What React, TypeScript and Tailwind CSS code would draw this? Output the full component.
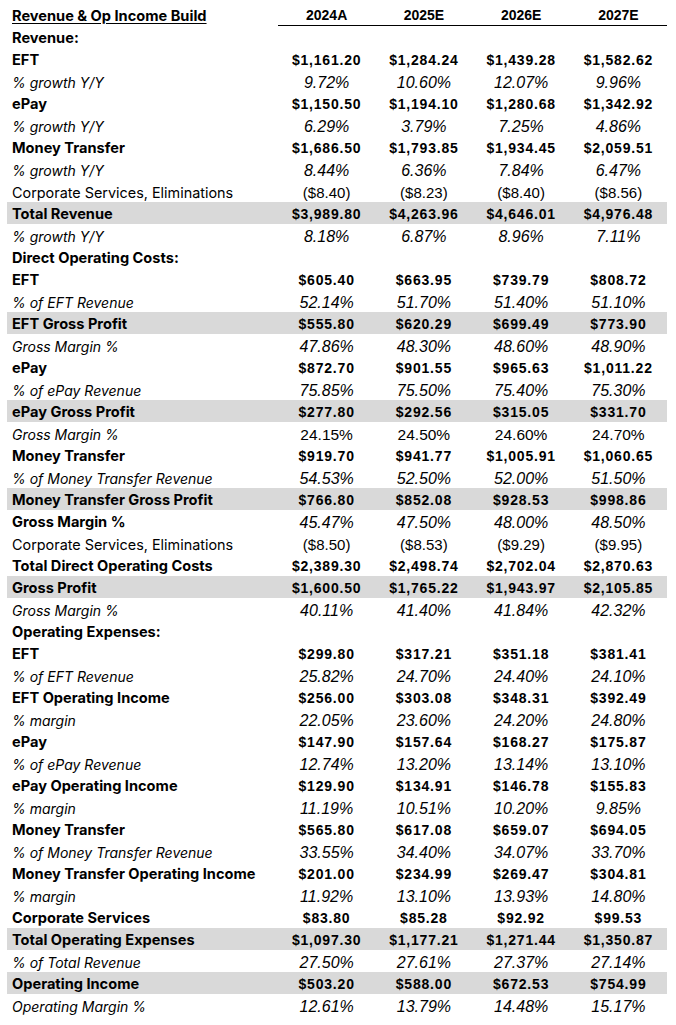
import React from "react";

type Kind = "sec" | "b" | "i" | "r" | "g" | "bi" | "ir";
type Row = { label: string; kind: Kind; vals?: string[] };

const rows: Row[] = [
  { label: "Revenue:", kind: "sec" },
  { label: "EFT", kind: "b", vals: ["$1,161.20", "$1,284.24", "$1,439.28", "$1,582.62"] },
  { label: "% growth Y/Y", kind: "i", vals: ["9.72%", "10.60%", "12.07%", "9.96%"] },
  { label: "ePay", kind: "b", vals: ["$1,150.50", "$1,194.10", "$1,280.68", "$1,342.92"] },
  { label: "% growth Y/Y", kind: "i", vals: ["6.29%", "3.79%", "7.25%", "4.86%"] },
  { label: "Money Transfer", kind: "b", vals: ["$1,686.50", "$1,793.85", "$1,934.45", "$2,059.51"] },
  { label: "% growth Y/Y", kind: "i", vals: ["8.44%", "6.36%", "7.84%", "6.47%"] },
  { label: "Corporate Services, Eliminations", kind: "r", vals: ["($8.40)", "($8.23)", "($8.40)", "($8.56)"] },
  { label: "Total Revenue", kind: "g", vals: ["$3,989.80", "$4,263.96", "$4,646.01", "$4,976.48"] },
  { label: "% growth Y/Y", kind: "i", vals: ["8.18%", "6.87%", "8.96%", "7.11%"] },
  { label: "Direct Operating Costs:", kind: "sec" },
  { label: "EFT", kind: "b", vals: ["$605.40", "$663.95", "$739.79", "$808.72"] },
  { label: "% of EFT Revenue", kind: "i", vals: ["52.14%", "51.70%", "51.40%", "51.10%"] },
  { label: "EFT Gross Profit", kind: "g", vals: ["$555.80", "$620.29", "$699.49", "$773.90"] },
  { label: "Gross Margin %", kind: "i", vals: ["47.86%", "48.30%", "48.60%", "48.90%"] },
  { label: "ePay", kind: "b", vals: ["$872.70", "$901.55", "$965.63", "$1,011.22"] },
  { label: "% of ePay Revenue", kind: "i", vals: ["75.85%", "75.50%", "75.40%", "75.30%"] },
  { label: "ePay Gross Profit", kind: "g", vals: ["$277.80", "$292.56", "$315.05", "$331.70"] },
  { label: "Gross Margin %", kind: "ir", vals: ["24.15%", "24.50%", "24.60%", "24.70%"] },
  { label: "Money Transfer", kind: "b", vals: ["$919.70", "$941.77", "$1,005.91", "$1,060.65"] },
  { label: "% of Money Transfer Revenue", kind: "i", vals: ["54.53%", "52.50%", "52.00%", "51.50%"] },
  { label: "Money Transfer Gross Profit", kind: "g", vals: ["$766.80", "$852.08", "$928.53", "$998.86"] },
  { label: "Gross Margin %", kind: "bi", vals: ["45.47%", "47.50%", "48.00%", "48.50%"] },
  { label: "Corporate Services, Eliminations", kind: "r", vals: ["($8.50)", "($8.53)", "($9.29)", "($9.95)"] },
  { label: "Total Direct Operating Costs", kind: "b", vals: ["$2,389.30", "$2,498.74", "$2,702.04", "$2,870.63"] },
  { label: "Gross Profit", kind: "g", vals: ["$1,600.50", "$1,765.22", "$1,943.97", "$2,105.85"] },
  { label: "Gross Margin %", kind: "i", vals: ["40.11%", "41.40%", "41.84%", "42.32%"] },
  { label: "Operating Expenses:", kind: "sec" },
  { label: "EFT", kind: "b", vals: ["$299.80", "$317.21", "$351.18", "$381.41"] },
  { label: "% of EFT Revenue", kind: "i", vals: ["25.82%", "24.70%", "24.40%", "24.10%"] },
  { label: "EFT Operating Income", kind: "b", vals: ["$256.00", "$303.08", "$348.31", "$392.49"] },
  { label: "% margin", kind: "i", vals: ["22.05%", "23.60%", "24.20%", "24.80%"] },
  { label: "ePay", kind: "b", vals: ["$147.90", "$157.64", "$168.27", "$175.87"] },
  { label: "% of ePay Revenue", kind: "i", vals: ["12.74%", "13.20%", "13.14%", "13.10%"] },
  { label: "ePay Operating Income", kind: "b", vals: ["$129.90", "$134.91", "$146.78", "$155.83"] },
  { label: "% margin", kind: "i", vals: ["11.19%", "10.51%", "10.20%", "9.85%"] },
  { label: "Money Transfer", kind: "b", vals: ["$565.80", "$617.08", "$659.07", "$694.05"] },
  { label: "% of Money Transfer Revenue", kind: "i", vals: ["33.55%", "34.40%", "34.07%", "33.70%"] },
  { label: "Money Transfer Operating Income", kind: "b", vals: ["$201.00", "$234.99", "$269.47", "$304.81"] },
  { label: "% margin", kind: "i", vals: ["11.92%", "13.10%", "13.93%", "14.80%"] },
  { label: "Corporate Services", kind: "b", vals: ["$83.80", "$85.28", "$92.92", "$99.53"] },
  { label: "Total Operating Expenses", kind: "g", vals: ["$1,097.30", "$1,177.21", "$1,271.44", "$1,350.87"] },
  { label: "% of Total Revenue", kind: "i", vals: ["27.50%", "27.61%", "27.37%", "27.14%"] },
  { label: "Operating Income", kind: "g", vals: ["$503.20", "$588.00", "$672.53", "$754.99"] },
  { label: "Operating Margin %", kind: "i", vals: ["12.61%", "13.79%", "14.48%", "15.17%"] },
];

const LABEL_FONT = "font-['Inter','Noto_Sans',sans-serif]";
const NUM_FONT = "font-['Liberation_Sans',Arial,sans-serif]";

function labelClass(k: Kind) {
  if (k === "i" || k === "ir") return "italic font-normal text-[14px]";
  if (k === "r") return "font-normal text-[14.4px]";
  return "font-bold text-[14.6px]";
}

function valClass(k: Kind) {
  if (k === "i" || k === "bi") return "italic font-normal text-[16px]";
  if (k === "ir") return "font-normal text-[15.5px]";
  if (k === "r") return "font-normal text-[15px]";
  return "font-bold text-[14px] tracking-[0.8px]";
}

export default function App() {
  return (
    <div className="w-[676px] h-[1025px] bg-white text-black pt-[4px] pl-[7px]">
      <div className="w-[660px] flex flex-col">
        <div className="grid grid-cols-[271px_1fr_1fr_1fr_1fr] h-[22px]">
          <div className={`${LABEL_FONT} font-bold text-[14.6px] leading-[25px] pl-[5px] underline underline-offset-[2px] whitespace-nowrap`}>
            Revenue &amp; Op Income Build
          </div>
          {["2024A", "2025E", "2026E", "2027E"].map((y) => (
            <div
              key={y}
              className={`${NUM_FONT} font-bold text-[14px] leading-[23px] h-[22px] text-center border-b border-black`}
            >
              {y}
            </div>
          ))}
        </div>
        {rows.map((r, i) => (
          <div
            key={i}
            className={`grid grid-cols-[271px_1fr_1fr_1fr_1fr] h-[22px] ${r.kind === "g" ? "bg-[#d9d9d9]" : ""}`}
          >
            <div className={`${LABEL_FONT} ${labelClass(r.kind)} leading-[25px] h-[22px] pl-[5px] whitespace-nowrap`}>
              {r.label}
            </div>
            {(r.vals ?? ["", "", "", ""]).map((v, j) => (
              <div key={j} className={`${NUM_FONT} ${valClass(r.kind)} leading-[25px] h-[22px] text-center whitespace-nowrap`}>
                {v}
              </div>
            ))}
          </div>
        ))}
      </div>
    </div>
  );
}
